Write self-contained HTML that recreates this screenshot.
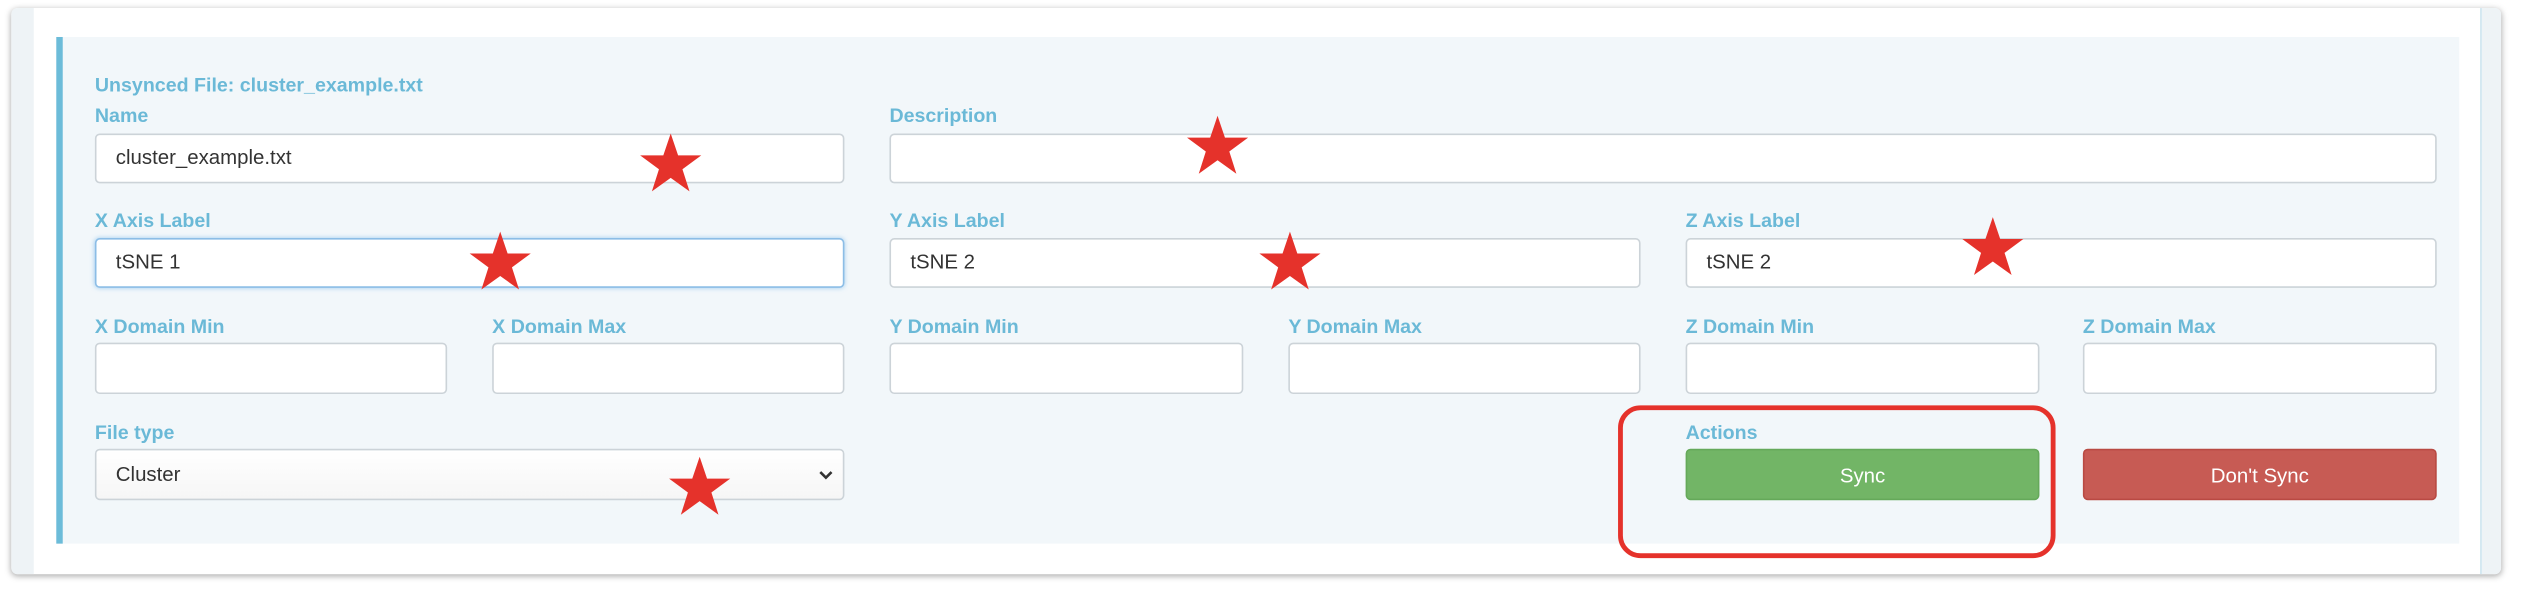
<!DOCTYPE html>
<html><head><meta charset="utf-8"><style>
html,body{margin:0;padding:0;width:2522px;height:590px;overflow:hidden;background:#fff;}
#w{position:absolute;left:0;top:0;width:1568px;height:367px;transform:scale(1.6084);transform-origin:0 0;font-family:"Liberation Sans",sans-serif;}
.card{position:absolute;left:7px;top:5px;width:1548px;height:352px;background:#fff;border-radius:4px;box-shadow:0 1px 4px rgba(0,0,0,.35);overflow:hidden;}
.ls{position:absolute;left:0;top:0;width:14px;height:100%;background:#eef3f6;}
.rs{position:absolute;right:0;top:0;width:12px;height:100%;background:#eef3f6;border-left:1px solid #cfe6f0;}
.panel{position:absolute;left:35px;top:23px;width:1494px;height:315px;background:#f2f7fa;border-left:4px solid #6cbcd9;box-sizing:border-box;}
.lb{position:absolute;font-size:12.2px;font-weight:bold;color:#6bb9d7;white-space:nowrap;}
.in{position:absolute;height:31px;background:#fff;border:1px solid #ccd3d8;border-radius:3px;box-sizing:border-box;font-size:12.7px;color:#333;line-height:29px;padding-left:12px;}
.btn{position:absolute;height:32px;border-radius:3px;color:#fff;font-size:12.7px;text-align:center;line-height:32px;box-sizing:border-box;}
.star{position:absolute;width:40px;height:40px;}
</style></head><body><div id="w">
<div class="card"><div class="ls"></div><div class="rs"></div></div>
<div class="panel"></div>
<div class="lb" style="left:59px;top:46px;">Unsynced File: cluster_example.txt</div>
<div class="lb" style="left:59px;top:65px;">Name</div>
<div class="lb" style="left:553px;top:65px;">Description</div>
<div class="in" style="left:59px;top:83px;width:466px;">cluster_example.txt</div>
<div class="in" style="left:553px;top:83px;width:962px;"></div>
<div class="lb" style="left:59px;top:130px;">X Axis Label</div>
<div class="lb" style="left:553px;top:130px;">Y Axis Label</div>
<div class="lb" style="left:1048px;top:130px;">Z Axis Label</div>
<div class="in" style="left:59px;top:148px;width:466px;border-color:#8cbde6;box-shadow:0 0 3px rgba(102,175,233,.6);">tSNE 1</div>
<div class="in" style="left:553px;top:148px;width:467px;">tSNE 2</div>
<div class="in" style="left:1048px;top:148px;width:467px;">tSNE 2</div>
<div class="lb" style="left:59px;top:196px;">X Domain Min</div>
<div class="lb" style="left:306px;top:196px;">X Domain Max</div>
<div class="lb" style="left:553px;top:196px;">Y Domain Min</div>
<div class="lb" style="left:801px;top:196px;">Y Domain Max</div>
<div class="lb" style="left:1048px;top:196px;">Z Domain Min</div>
<div class="lb" style="left:1295px;top:196px;">Z Domain Max</div>
<div class="in" style="left:59px;top:213px;width:219px;height:32px;"></div>
<div class="in" style="left:306px;top:213px;width:219px;height:32px;"></div>
<div class="in" style="left:553px;top:213px;width:220px;height:32px;"></div>
<div class="in" style="left:801px;top:213px;width:219px;height:32px;"></div>
<div class="in" style="left:1048px;top:213px;width:220px;height:32px;"></div>
<div class="in" style="left:1295px;top:213px;width:220px;height:32px;"></div>
<div class="lb" style="left:59px;top:262px;">File type</div>
<div class="in" style="left:59px;top:279px;width:466px;height:32px;line-height:30px;background:linear-gradient(#fff,#f6f6f6);">Cluster<svg style="position:absolute;right:6px;top:12px" width="9" height="7" viewBox="0 0 9 7"><path d="M1 1.5L4.5 5 8 1.5" fill="none" stroke="#333" stroke-width="1.6"/></svg></div>
<div class="lb" style="left:1048px;top:262px;">Actions</div>
<div class="btn" style="left:1048px;top:279px;width:220px;background:#72b566;border:1px solid #65a95a;">Sync</div>
<div class="btn" style="left:1295px;top:279px;width:220px;background:#c75b54;border:1px solid #b94a43;">Don't Sync</div>
<div style="position:absolute;left:1006px;top:252px;width:272px;height:95px;border:3px solid #e5322b;border-radius:14px;box-sizing:border-box;"></div>
<svg width="0" height="0" style="position:absolute"><defs><polygon id="s" points="20,1 24.6,14.6 39,14.6 27.3,23.2 31.7,37 20,28.6 8.3,37 12.7,23.2 1,14.6 15.4,14.6" fill="#e5322b"/></defs></svg>
<svg class="star" style="left:397px;top:82px" viewBox="0 0 40 40"><use href="#s"/></svg>
<svg class="star" style="left:737px;top:71px" viewBox="0 0 40 40"><use href="#s"/></svg>
<svg class="star" style="left:291px;top:143px" viewBox="0 0 40 40"><use href="#s"/></svg>
<svg class="star" style="left:782px;top:143px" viewBox="0 0 40 40"><use href="#s"/></svg>
<svg class="star" style="left:1219px;top:134px" viewBox="0 0 40 40"><use href="#s"/></svg>
<svg class="star" style="left:415px;top:283px" viewBox="0 0 40 40"><use href="#s"/></svg>
</div></body></html>
